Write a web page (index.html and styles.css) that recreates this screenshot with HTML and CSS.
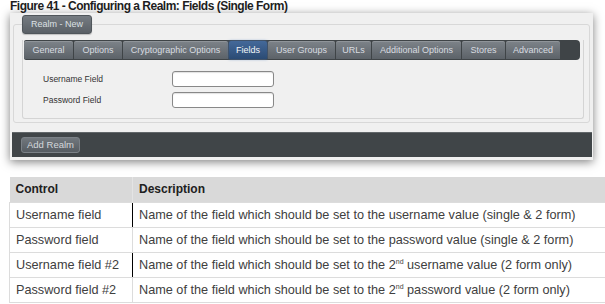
FILE: index.html
```html
<!DOCTYPE html>
<html>
<head>
<meta charset="utf-8">
<link rel="stylesheet" href="styles.css">
</head>
<body>
<h1 class="caption">Figure 41 - Configuring a Realm: Fields (Single Form)</h1>
<div class="shot">
  <fieldset class="realm">
    <legend class="legend">Realm - New</legend>
    <div class="panel">
      <div class="tabs">
        <span class="tab">General</span>
        <span class="tab">Options</span>
        <span class="tab">Cryptographic Options</span>
        <span class="tab active">Fields</span>
        <span class="tab">User Groups</span>
        <span class="tab">URLs</span>
        <span class="tab">Additional Options</span>
        <span class="tab">Stores</span>
        <span class="tab">Advanced</span>
      </div>
      <div class="form">
        <label class="label">Username Field</label>
        <span class="input"></span>
        <label class="label">Password Field</label>
        <span class="input"></span>
      </div>
    </div>
  </fieldset>
  <div class="footer">
    <span class="btn">Add Realm</span>
  </div>
</div>
<table class="ctable">
  <thead>
    <tr><th class="c1">Control</th><th>Description</th></tr>
  </thead>
  <tbody>
    <tr><td class="c1 mark">Username field</td><td>Name of the field which should be set to the username value (single &amp; 2 form)</td></tr>
    <tr><td class="c1">Password field</td><td>Name of the field which should be set to the password value (single &amp; 2 form)</td></tr>
    <tr><td class="c1 mark">Username field #2</td><td>Name of the field which should be set to the 2<sup>nd</sup> username value (2 form only)</td></tr>
    <tr><td class="c1">Password field #2</td><td>Name of the field which should be set to the 2<sup>nd</sup> password value (2 form only)</td></tr>
  </tbody>
</table>
</body>
</html>
```
FILE: styles.css
```css
* { box-sizing: border-box; }
body {
  margin: 0;
  background: #fff;
  font-family: "Liberation Sans", Arial, sans-serif;
  overflow: hidden;
}
.caption {
  margin: 0 0 0 10px;
  height: 13px;
  font: bold 12px/13px "Liberation Sans", Arial, sans-serif;
  letter-spacing: -0.5px;
  color: #1e1e1e;
  white-space: nowrap;
}
.shot {
  margin-left: 10px;
  width: 583px;
  background: #f0f0f0;
  padding: 2px 1px 3px 2px;
  box-shadow: 0 2px 9px rgba(0, 0, 0, 0.5);
}
.realm {
  margin: 0 2px 0 1px;
  border: 1px solid #d8d8d8;
  border-radius: 3px;
  padding: 6px 5px 3px 8px;
  min-width: 0;
}
.legend {
  margin: 0;
  padding: 0 8px;
  height: 19px;
  line-height: 17px;
  border: 1px solid #50565b;
  border-radius: 3px;
  background: linear-gradient(#767c82, #5a6066);
  color: #dde1e4;
  font-size: 9px;
  box-shadow: 0 1px 1px rgba(0, 0, 0, 0.2);
}
.panel {
  border: 1px solid #d4d4d4;
  border-top: 0;
  border-radius: 0 0 3px 3px;
  padding: 0 3px 10px 1px;
}
.tabs {
  display: grid;
  grid-template-columns: 49px 48px 105px 38px 67px 35px 89px 43px 54px;
  column-gap: 1px;
  height: 20px;
  padding: 1px 0;
  background: #3f4447;
  border-radius: 2px 4px 4px 2px;
}
.tab {
  background: linear-gradient(#7d8389, #5c6268);
  color: #d8dce0;
  font-size: 9px;
  line-height: 18px;
  text-align: center;
  white-space: nowrap;
  border-radius: 2px 2px 0 0;
  box-shadow: inset 0 1px 0 rgba(255, 255, 255, 0.15);
}
.tab.active {
  background: linear-gradient(#44699a, #2b4b74);
  color: #f4f6f8;
  box-shadow: 0 0 3px rgba(70, 120, 190, 0.8);
}
.form {
  display: grid;
  grid-template-columns: 129px 102px;
  row-gap: 5px;
  align-items: center;
  padding: 11px 0 0 19px;
}
.label {
  font-size: 8.5px;
  color: #333;
}
.input {
  height: 16px;
  background: #fff;
  border: 1px solid #888;
  border-radius: 3px;
  box-shadow: inset 0 1px 1px rgba(0, 0, 0, 0.12);
}
.footer {
  display: flex;
  align-items: flex-start;
  margin-top: 9px;
  height: 25px;
  padding: 4px 0 0 9px;
  background: #404548;
  border-top: 1px solid #62676a;
}
.btn {
  display: block;
  width: 59px;
  height: 16px;
  line-height: 14px;
  text-align: center;
  font-size: 9.5px;
  color: #d4d8dc;
  background: linear-gradient(#71777d, #565c62);
  border: 1px solid #7b8187;
  border-radius: 3px;
}
.ctable {
  margin: 17px 0 0 9px;
  width: 600px;
  border-collapse: collapse;
  font-size: 12.7px;
}
.ctable th {
  height: 25px;
  padding: 0 6px;
  background: #d9d9d9;
  text-align: left;
  font-weight: bold;
  font-size: 12px;
  color: #202020;
}
.ctable th.c1 { border-right: 1px solid #e4e4e4; }
.ctable td {
  height: 25px;
  padding: 0 6px;
  border: 1px solid #dcdcdc;
  color: #404040;
  white-space: nowrap;
}
.ctable .c1 { width: 123px; }
.ctable td.mark { border-right: 1px solid #000; }
.ctable sup { font-size: 7px; line-height: 0; vertical-align: 5px; }
```
